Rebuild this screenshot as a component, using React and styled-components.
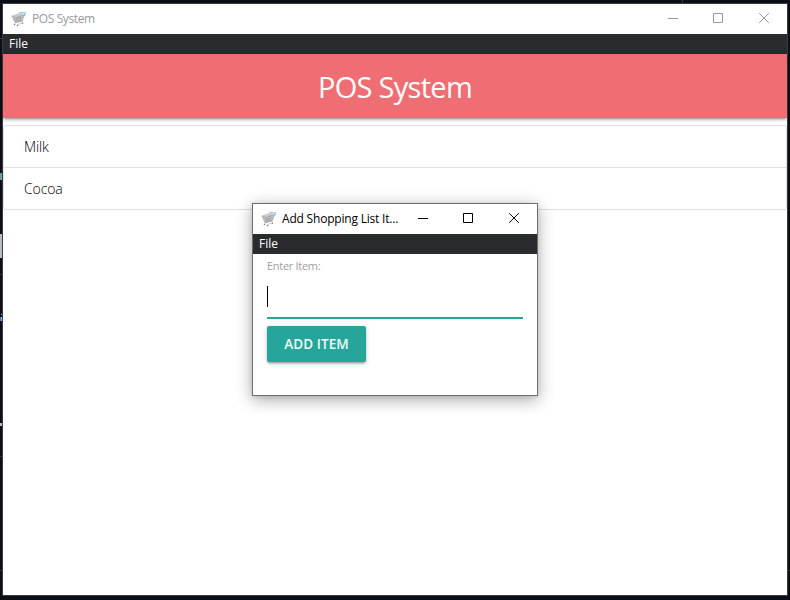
import React from "react";
import styled, { createGlobalStyle } from "styled-components";

const Global = createGlobalStyle`
  *, *::before, *::after { box-sizing: border-box; }
  body { margin: 0; font-family: "Open Sans", "Noto Sans", sans-serif; }
  p, h1, ul { margin: 0; padding: 0; font-weight: 400; }
`;

const Desktop = styled.div`
  position: relative;
  width: 790px;
  height: 600px;
  padding: 3px 2px 4px;
  overflow: hidden;
  background:
    linear-gradient(#b6bcc4, #b6bcc4) 0 234px / 3px 24px no-repeat,
    linear-gradient(#b6bcc4, #b6bcc4) 0 423px / 3px 3px no-repeat,
    linear-gradient(90deg, #2fa4dc 1px, #b9906f 1px) 0 173px / 2px 7px no-repeat,
    linear-gradient(90deg, #3f62c0 1px, #a9bdd0 1px) 0 317px / 2px 4px no-repeat,
    linear-gradient(#a9a29a, #a9a29a) 1px 314px / 1px 1px no-repeat,
    linear-gradient(#33363c, #33363c) 0 38px / 3px 1px no-repeat,
    linear-gradient(#33363c, #33363c) 0 274px / 3px 1px no-repeat,
    linear-gradient(#33363c, #33363c) 0 456px / 3px 1px no-repeat,
    linear-gradient(#33363c, #33363c) 0 570px / 790px 1px no-repeat,
    linear-gradient(#33363c, #33363c) 682px 0 / 1px 3px no-repeat,
    #0b0e16;
`;

const MainWindow = styled.main`
  display: flex;
  flex-direction: column;
  width: 786px;
  height: 593px;
  border: 1px solid #3a3b3e;
  background: #fff;
`;

const DialogWindow = styled.section`
  position: absolute;
  left: 252px;
  top: 203px;
  display: flex;
  flex-direction: column;
  width: 286px;
  height: 193px;
  border: 1px solid #6d6d6e;
  background: #fff;
  box-shadow: 0 4px 16px rgba(0, 0, 0, 0.32), 0 1px 5px rgba(0, 0, 0, 0.12);
`;

const TitleBar = styled.header`
  display: flex;
  align-items: center;
  flex: 0 0 30px;
  padding-left: 8px;
  color: ${(p) => (p.$active ? "#000" : "#999")};
`;

const Title = styled.span`
  flex: 1;
  margin-left: 5px;
  font-size: 12px;
  line-height: 16px;
  letter-spacing: ${(p) => p.$tracking}px;
  white-space: nowrap;
`;

const Controls = styled.div`
  display: flex;
  gap: 35px;
  height: 11px;
  margin-top: -1px;
  padding-right: 17px;
`;

const MenuBar = styled.nav`
  flex: 0 0 20px;
  padding-left: 6px;
  background: #292b2f;
  color: #fff;
  font-size: 12px;
  line-height: 20px;
`;

const Banner = styled.header`
  flex: 0 0 64px;
  height: 64px;
  min-height: 0;
  background: #ee6e73;
  color: #fff;
  text-align: center;
  box-shadow: 0 2px 2px 0 rgba(0, 0, 0, 0.14), 0 3px 1px -2px rgba(0, 0, 0, 0.12),
    0 1px 5px 0 rgba(0, 0, 0, 0.2);
`;

const BannerTitle = styled.h1`
  font-size: 29px;
  line-height: 65px;
  letter-spacing: -0.7px;
`;

const List = styled.ul`
  margin-top: 7px;
  list-style: none;
  border: 1px solid #e0e0e0;
  border-radius: 2px;
`;

const Item = styled.li`
  height: 42px;
  padding-left: 20px;
  font-size: 14px;
  font-weight: 300;
  line-height: 42px;
  letter-spacing: -0.1px;
  color: #000;
  &:not(:last-child) { border-bottom: 1px solid #e0e0e0; }
  &:last-child { height: 41px; line-height: 41px; }
`;

const Form = styled.form`
  display: flex;
  flex-direction: column;
  align-items: flex-start;
  padding: 4px 14px;
`;

const Label = styled.label`
  font-size: 11px;
  line-height: 16px;
  letter-spacing: -0.3px;
  color: #9e9e9e;
`;

const Field = styled.div`
  width: 100%;
  height: 45px;
  padding-top: 12px;
  border-bottom: 2px solid #26a69a;
`;

const Caret = styled.div`
  width: 1px;
  height: 21px;
  background: #000;
`;

const AddButton = styled.button`
  width: 99px;
  height: 36px;
  margin-top: 7px;
  padding: 0;
  border: 0;
  border-radius: 2px;
  background: #26a69a;
  color: #f0faf8;
  font: 600 13.5px/36px "Open Sans", sans-serif;
  letter-spacing: 0.1px;
  box-shadow: 0 2px 2px 0 rgba(0, 0, 0, 0.14), 0 3px 1px -2px rgba(0, 0, 0, 0.12),
    0 1px 5px 0 rgba(0, 0, 0, 0.2);
`;

const CartIcon = () => (
  <svg width="16" height="16" viewBox="0 0 16 16" fill="none">
    <path d="M1 4.500 8.500 2l5.500 1.500L11 10.500l-6.500 1.500z" fill="#c9c9cb" />
    <path d="M1 5 5.500 6.500 12.500 4M5.500 6.500l-.5 5M2 7.500l3.500 1.200 6.500-2M3 10l2.300.8 6-1.800M7.500 6 7 11M9.500 5 9 10.500" stroke="#96979a" strokeWidth=".6" />
    <path d="m1 5 3 6.500 7-1.500L13.500 3" stroke="#a9a9ac" strokeWidth=".8" />
    <path d="m8.500 1.500 6 .5-1 3" stroke="#8fbbe0" strokeWidth="1.100" />
    <path d="m4 12-.5 1.500M11 10.500l.5 1.500-5 1.500" stroke="#c0c0c2" strokeWidth=".8" />
    <circle cx="3.500" cy="13.500" r=".8" fill="#808083" />
    <circle cx="6.500" cy="14.500" r=".8" fill="#808083" />
    <circle cx="11.500" cy="12.300" r=".8" fill="#909093" />
  </svg>
);

const WindowControls = () => (
  <Controls>
    <svg width="11" height="11" stroke="currentColor"><path d="M1 5.500h10" /></svg>
    <svg width="11" height="11" stroke="currentColor" fill="none"><path d="M.5.500h9v9h-9z" /></svg>
    <svg width="11" height="11" stroke="currentColor"><path d="m.2.200 9.600 9.600m0-9.600-9.600 9.600" /></svg>
  </Controls>
);

const WindowFrame = ({ title, active, tracking }) => (
  <>
    <TitleBar $active={active}>
      <CartIcon />
      <Title $tracking={tracking}>{title}</Title>
      <WindowControls />
    </TitleBar>
    <MenuBar>File</MenuBar>
  </>
);

export default function App() {
  return (
    <>
      <Global />
      <Desktop>
        <MainWindow>
          <WindowFrame title="POS System" tracking={-0.4} />
          <Banner><BannerTitle>POS System</BannerTitle></Banner>
          <List>
            <Item>Milk</Item>
            <Item>Cocoa</Item>
          </List>
        </MainWindow>
        <DialogWindow>
          <WindowFrame title="Add Shopping List It..." active tracking={-0.2} />
          <Form>
            <Label>Enter Item:</Label>
            <Field><Caret /></Field>
            <AddButton type="button">ADD ITEM</AddButton>
          </Form>
        </DialogWindow>
      </Desktop>
    </>
  );
}
